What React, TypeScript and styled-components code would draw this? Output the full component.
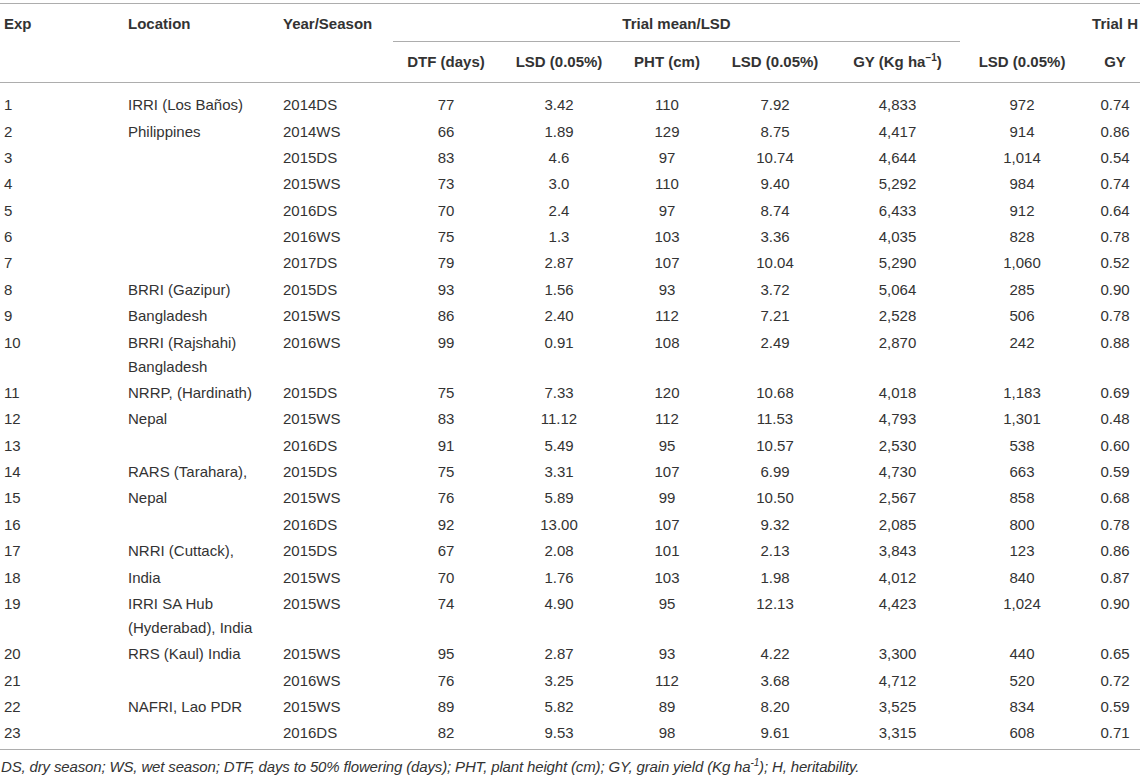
import React from "react";
import styled, { createGlobalStyle } from "styled-components";

const Global = createGlobalStyle`
  html, body { margin: 0; padding: 0; background: #fff; overflow: hidden; }
`;

const Page = styled.div`
  width: 1145px;
  overflow: hidden;
  padding-top: 3px;
  font-family: "Liberation Sans", Arial, Helvetica, sans-serif;
  font-size: 15px;
  color: #333;
`;

const Table = styled.table`
  width: 1140px;
  border-collapse: collapse;
  table-layout: fixed;
  border-top: 1px solid #adadad;
  border-bottom: 1px solid #adadad;
`;

type Align = "left" | "center";

const Th = styled.th<{ $align: Align; $line?: boolean; $pt: number; $pb: number; $last?: boolean }>`
  font-weight: bold;
  text-align: ${(p) => p.$align};
  vertical-align: top;
  line-height: 24px;
  white-space: nowrap;
  padding: ${(p) => `${p.$pt}px ${p.$last ? 0 : 4}px ${p.$pb}px ${p.$last ? 6 : 4}px`};
  border-bottom: ${(p) => (p.$line ? "1px solid #adadad" : "none")};
`;

const HeadRow = styled.tr<{ $line?: boolean }>`
  border-bottom: ${(p) => (p.$line ? "1px solid #adadad" : "none")};
`;

const Td = styled.td<{ $align: Align; $pt: number; $pb: number; $last?: boolean }>`
  text-align: ${(p) => p.$align};
  vertical-align: top;
  line-height: 24px;
  white-space: nowrap;
  padding: ${(p) => `${p.$pt}px ${p.$last ? 0 : 4}px ${p.$pb}px ${p.$last ? 6 : 4}px`};
`;

const Sup = styled.sup`
  font-size: 10px;
  line-height: 0;
  vertical-align: 6px;
`;

const Note = styled.p`
  margin: 8px 0 0 1px;
  font-style: italic;
  font-size: 15px;
  line-height: 18px;
  color: #333;
  letter-spacing: -0.15px;
`;

const cols: { w: number; align: Align }[] = [
  { w: 124, align: "left" },
  { w: 155, align: "left" },
  { w: 114, align: "left" },
  { w: 106, align: "center" },
  { w: 120, align: "center" },
  { w: 96, align: "center" },
  { w: 120, align: "center" },
  { w: 125, align: "center" },
  { w: 124, align: "center" },
  { w: 56, align: "center" },
];

const rows: string[][] = [
  ["1", "IRRI (Los Baños)", "2014DS", "77", "3.42", "110", "7.92", "4,833", "972", "0.74"],
  ["2", "Philippines", "2014WS", "66", "1.89", "129", "8.75", "4,417", "914", "0.86"],
  ["3", "", "2015DS", "83", "4.6", "97", "10.74", "4,644", "1,014", "0.54"],
  ["4", "", "2015WS", "73", "3.0", "110", "9.40", "5,292", "984", "0.74"],
  ["5", "", "2016DS", "70", "2.4", "97", "8.74", "6,433", "912", "0.64"],
  ["6", "", "2016WS", "75", "1.3", "103", "3.36", "4,035", "828", "0.78"],
  ["7", "", "2017DS", "79", "2.87", "107", "10.04", "5,290", "1,060", "0.52"],
  ["8", "BRRI (Gazipur)", "2015DS", "93", "1.56", "93", "3.72", "5,064", "285", "0.90"],
  ["9", "Bangladesh", "2015WS", "86", "2.40", "112", "7.21", "2,528", "506", "0.78"],
  ["10", "BRRI (Rajshahi)|Bangladesh", "2016WS", "99", "0.91", "108", "2.49", "2,870", "242", "0.88"],
  ["11", "NRRP, (Hardinath)", "2015DS", "75", "7.33", "120", "10.68", "4,018", "1,183", "0.69"],
  ["12", "Nepal", "2015WS", "83", "11.12", "112", "11.53", "4,793", "1,301", "0.48"],
  ["13", "", "2016DS", "91", "5.49", "95", "10.57", "2,530", "538", "0.60"],
  ["14", "RARS (Tarahara),", "2015DS", "75", "3.31", "107", "6.99", "4,730", "663", "0.59"],
  ["15", "Nepal", "2015WS", "76", "5.89", "99", "10.50", "2,567", "858", "0.68"],
  ["16", "", "2016DS", "92", "13.00", "107", "9.32", "2,085", "800", "0.78"],
  ["17", "NRRI (Cuttack),", "2015DS", "67", "2.08", "101", "2.13", "3,843", "123", "0.86"],
  ["18", "India", "2015WS", "70", "1.76", "103", "1.98", "4,012", "840", "0.87"],
  ["19", "IRRI SA Hub|(Hyderabad), India", "2015WS", "74", "4.90", "95", "12.13", "4,423", "1,024", "0.90"],
  ["20", "RRS (Kaul) India", "2015WS", "95", "2.87", "93", "4.22", "3,300", "440", "0.65"],
  ["21", "", "2016WS", "76", "3.25", "112", "3.68", "4,712", "520", "0.72"],
  ["22", "NAFRI, Lao PDR", "2015WS", "89", "5.82", "89", "8.20", "3,525", "834", "0.59"],
  ["23", "", "2016DS", "82", "9.53", "98", "9.61", "3,315", "608", "0.71"],
];

const subHeads: React.ReactNode[] = [
  "DTF (days)",
  "LSD (0.05%)",
  "PHT (cm)",
  "LSD (0.05%)",
  <>
    GY (Kg ha<Sup>−1</Sup>)
  </>,
  "LSD (0.05%)",
  "GY",
];

function renderCell(text: string) {
  const parts = text.split("|");
  return parts.map((p, i) => (
    <React.Fragment key={i}>
      {i > 0 && <br />}
      {p}
    </React.Fragment>
  ));
}

export default function App() {
  const last = rows.length - 1;
  return (
    <>
      <Global />
      <Page>
        <Table>
          <colgroup>
            {cols.map((c, i) => (
              <col key={i} style={{ width: c.w }} />
            ))}
          </colgroup>
          <thead>
            <HeadRow>
              <Th $align="left" $pt={8} $pb={5}>Exp</Th>
              <Th $align="left" $pt={8} $pb={5}>Location</Th>
              <Th $align="left" $pt={8} $pb={5}>Year/Season</Th>
              <Th $align="center" colSpan={5} $line $pt={8} $pb={5}>
                Trial mean/LSD
              </Th>
              <Th $align="center" $pt={8} $pb={5} />
              <Th $align="center" $pt={8} $pb={5} $last>
                Trial H
              </Th>
            </HeadRow>
            <HeadRow $line>
              <Th $align="left" $pt={8} $pb={8} />
              <Th $align="left" $pt={8} $pb={8} />
              <Th $align="left" $pt={8} $pb={8} />
              {subHeads.map((h, i) => (
                <Th key={i} $align="center" $pt={8} $pb={8} $last={i === subHeads.length - 1}>
                  {h}
                </Th>
              ))}
            </HeadRow>
          </thead>
          <tbody>
            {rows.map((r, ri) => (
              <tr key={ri}>
                {r.map((c, ci) => (
                  <Td
                    key={ci}
                    $align={cols[ci].align}
                    $pt={ri === 0 ? 10.2 : 1.2}
                    $pb={ri === last ? 3.2 : 1.2}
                    $last={ci === cols.length - 1}
                  >
                    {renderCell(c)}
                  </Td>
                ))}
              </tr>
            ))}
          </tbody>
        </Table>
        <Note>
          DS, dry season; WS, wet season; DTF, days to 50% flowering (days); PHT, plant height (cm); GY,
          grain yield (Kg ha<Sup>-1</Sup>); H, heritability.
        </Note>
      </Page>
    </>
  );
}
